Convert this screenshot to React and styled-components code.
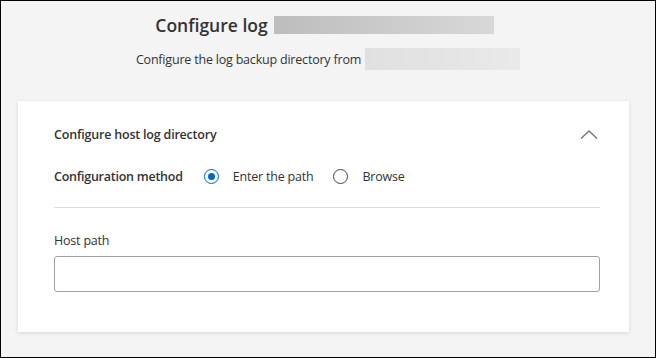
import React, { useState } from "react";
import styled, { createGlobalStyle } from "styled-components";

const GlobalStyle = createGlobalStyle`
  html, body {
    margin: 0;
    padding: 0;
    background: #f4f4f4;
  }
  * {
    box-sizing: border-box;
  }
`;

const App = () => {
  const [method, setMethod] = useState("path");
  const [open, setOpen] = useState(true);

  return (
    <Page>
      <GlobalStyle />
      <Header>
        <TitleRow>
          <Title>Configure log</Title>
          <Redacted $w={220} $h={18} $from="#bdbdbd" $to="#d8d8d8" />
        </TitleRow>
        <SubRow>
          <Subtitle>Configure the log backup directory from</Subtitle>
          <Redacted $w={155} $h={22} $from="#e0e0e0" $to="#e9e9e9" />
        </SubRow>
      </Header>

      <Card>
        <CardHead onClick={() => setOpen(!open)}>
          <CardTitle>Configure host log directory</CardTitle>
          <Chevron viewBox="0 0 18 11" $open={open}>
            <polyline points="1,9.5 9,2 17,9.5" />
          </Chevron>
        </CardHead>

        {open && (
          <>
            <MethodRow>
              <FieldName>Configuration method</FieldName>
              <RadioOption onClick={() => setMethod("path")}>
                <RadioDot $checked={method === "path"} />
                Enter the path
              </RadioOption>
              <RadioOption onClick={() => setMethod("browse")}>
                <RadioDot $checked={method === "browse"} />
                Browse
              </RadioOption>
            </MethodRow>

            <Divider />

            <Label>Host path</Label>
            <TextInput type="text" />
          </>
        )}
      </Card>
    </Page>
  );
};

const Page = styled.div`
  width: 656px;
  height: 358px;
  border: 1px solid #000;
  background: #f4f4f4;
  font-family: "Open Sans", "Liberation Sans", sans-serif;
  color: #333;
  padding: 14px 26px 0 17px;
  display: flex;
  flex-direction: column;
`;

const Header = styled.div`
  display: flex;
  flex-direction: column;
  align-items: center;
`;

const TitleRow = styled.div`
  display: flex;
  align-items: center;
  gap: 6px;
  height: 20px;
  padding-left: 2px;
`;

const Title = styled.h1`
  margin: 0;
  font-size: 17.5px;
  font-weight: 600;
  color: #333;
  letter-spacing: 0;
`;

const SubRow = styled.div`
  display: flex;
  align-items: center;
  gap: 4px;
  margin-top: 13px;
  padding-left: 9px;
`;

const Subtitle = styled.p`
  margin: 0;
  font-size: 12.5px;
  color: #333;
  letter-spacing: -0.2px;
`;

const Redacted = styled.div`
  width: ${(p) => p.$w}px;
  height: ${(p) => p.$h}px;
  background: linear-gradient(90deg, ${(p) => p.$from}, ${(p) => p.$to});
`;

const Card = styled.div`
  margin-top: 31px;
  background: #fff;
  box-shadow: 0 1px 4px rgba(0, 0, 0, 0.12);
  padding: 22px 29px 40px 36px;
  display: flex;
  flex-direction: column;
`;

const CardHead = styled.div`
  display: flex;
  align-items: center;
  justify-content: space-between;
  height: 22px;
  cursor: pointer;
`;

const CardTitle = styled.div`
  font-size: 12.5px;
  font-weight: 600;
  color: #333;
  letter-spacing: -0.2px;
`;

const Chevron = styled.svg`
  width: 18px;
  height: 11px;
  margin-right: 2px;
  fill: none;
  stroke: #777;
  stroke-width: 1.4;
  transform: rotate(${(p) => (p.$open ? 0 : 180)}deg);
`;

const MethodRow = styled.div`
  display: flex;
  align-items: center;
  margin-top: 20px;
  height: 22px;
`;

const FieldName = styled.div`
  font-size: 12.5px;
  font-weight: 600;
  color: #333;
  letter-spacing: -0.25px;
  margin-right: 21px;
`;

const RadioOption = styled.label`
  display: flex;
  align-items: center;
  gap: 14px;
  font-size: 12.5px;
  color: #333;
  letter-spacing: -0.2px;
  margin-right: 20px;
  cursor: pointer;
`;

const RadioDot = styled.span`
  width: 15px;
  height: 15px;
  border-radius: 50%;
  border: 1.5px solid ${(p) => (p.$checked ? "#0067c5" : "#444")};
  display: flex;
  align-items: center;
  justify-content: center;

  &::after {
    content: "";
    width: 7px;
    height: 7px;
    border-radius: 50%;
    background: #0067c5;
    display: ${(p) => (p.$checked ? "block" : "none")};
  }
`;

const Divider = styled.hr`
  margin: 20px 0 0;
  border: none;
  border-top: 1px solid #dcdcdc;
`;

const Label = styled.div`
  margin-top: 24px;
  font-size: 12.5px;
  color: #333;
  letter-spacing: -0.2px;
`;

const TextInput = styled.input`
  margin-top: 7px;
  height: 36px;
  width: 100%;
  border: 1px solid #a0a0a0;
  border-radius: 3px;
  padding: 0 10px;
  font-family: inherit;
  font-size: 13px;
  outline: none;
`;

export default App;
